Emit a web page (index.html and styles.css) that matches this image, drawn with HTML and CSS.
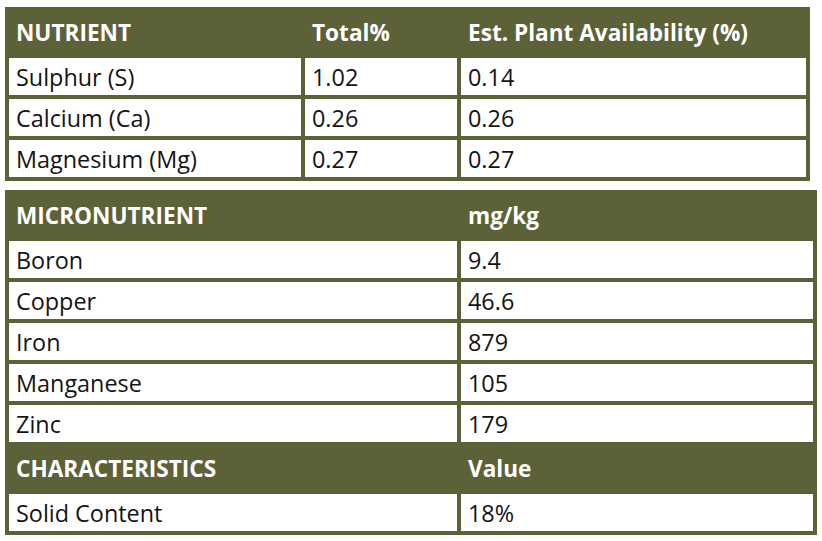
FILE: index.html
```html
<!DOCTYPE html>
<html lang="en">
<head>
<meta charset="utf-8">
<title>Nutrient analysis</title>
<link rel="stylesheet" href="styles.css">
</head>
<body>
<main class="sheet">
  <table class="grid grid-nutrient">
    <colgroup>
      <col class="c-name"><col class="c-total"><col class="c-avail">
    </colgroup>
    <thead>
      <tr class="head"><th>NUTRIENT</th><th>Total%</th><th>Est. Plant Availability (%)</th></tr>
    </thead>
    <tbody>
      <tr><td>Sulphur (S)</td><td>1.02</td><td>0.14</td></tr>
      <tr><td>Calcium (Ca)</td><td>0.26</td><td>0.26</td></tr>
      <tr><td>Magnesium (Mg)</td><td>0.27</td><td>0.27</td></tr>
    </tbody>
  </table>

  <table class="grid grid-micro">
    <colgroup>
      <col class="c-mname"><col class="c-mval">
    </colgroup>
    <tbody>
      <tr class="head"><th>MICRONUTRIENT</th><th>mg/kg</th></tr>
      <tr><td>Boron</td><td>9.4</td></tr>
      <tr><td>Copper</td><td>46.6</td></tr>
      <tr><td>Iron</td><td>879</td></tr>
      <tr><td>Manganese</td><td>105</td></tr>
      <tr><td>Zinc</td><td>179</td></tr>
      <tr class="head head-alt"><th>CHARACTERISTICS</th><th>Value</th></tr>
      <tr><td>Solid Content</td><td>18%</td></tr>
    </tbody>
  </table>
</main>
</body>
</html>
```

FILE: styles.css
```css
html, body {
  margin: 0;
  padding: 0;
  background: #ffffff;
}

.sheet {
  padding: 7px 0 0 5px;
  font-family: "Open Sans", "Noto Sans", "Liberation Sans", sans-serif;
}

.grid {
  table-layout: fixed;
  border-collapse: separate;
  border-spacing: 4px;
  background: #5d6137;
}

.grid-nutrient {
  width: 805px;
  margin-bottom: 9px;
}

.grid-micro {
  width: 812px;
}

.c-name { width: 292px; }
.c-total { width: 152px; }
.c-avail { width: 345px; }
.c-mname { width: 448px; }
.c-mval { width: 352px; }

.grid th,
.grid td {
  box-sizing: border-box;
  padding: 0 0 0 7px;
  text-align: left;
  vertical-align: middle;
  white-space: nowrap;
  overflow: hidden;
}

.grid th {
  height: 43px;
  padding-top: 1px;
  line-height: 42px;
  color: #ffffff;
  font-weight: 700;
  font-size: 22.6px;
  background: transparent;
}

.grid .head-alt th {
  height: 44px;
  line-height: 43px;
}

.grid td {
  height: 37px;
  padding-top: 2px;
  line-height: 35px;
  background: #ffffff;
  color: #141414;
  font-size: 23.4px;
  font-weight: 400;
}
```
